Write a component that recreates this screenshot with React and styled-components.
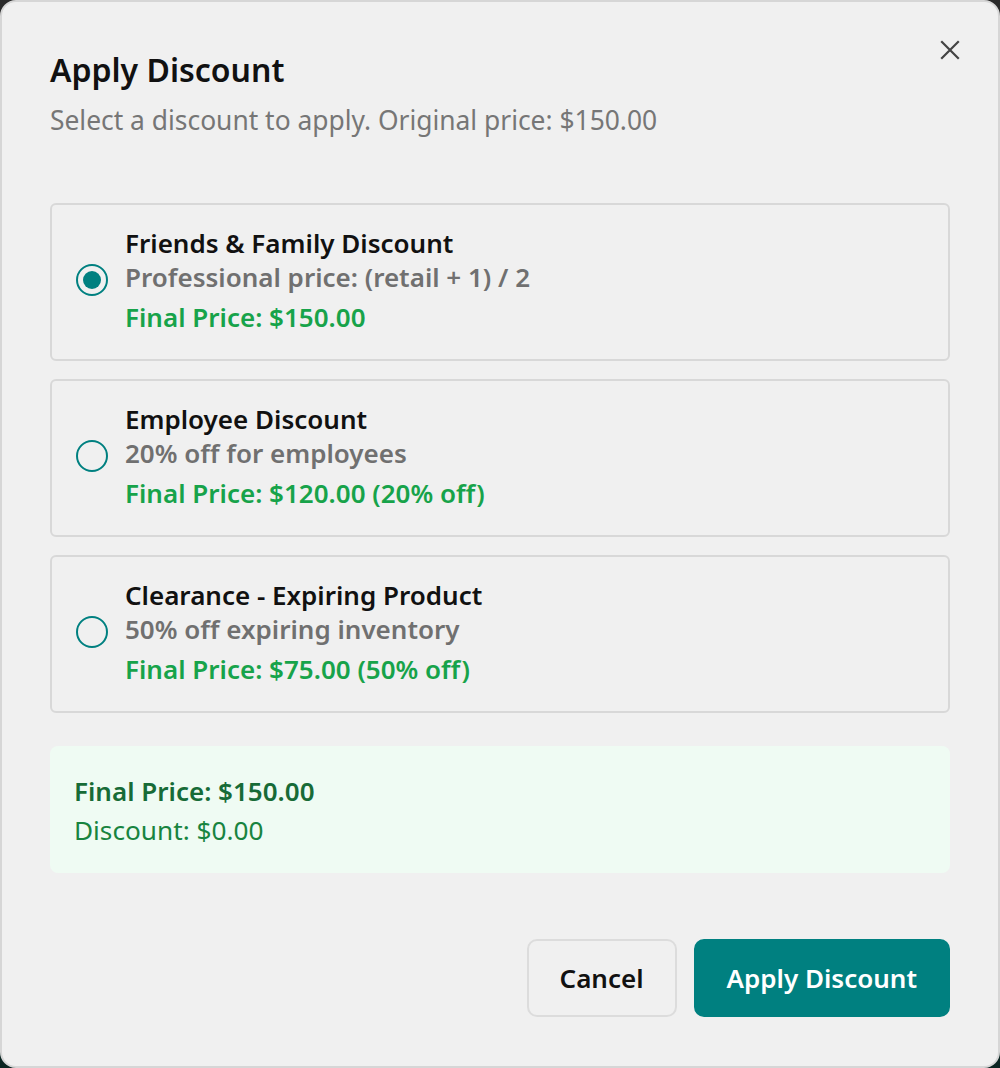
import React, { useState } from 'react';
import styled, { createGlobalStyle } from 'styled-components';

const teal = '#008080';
const font = '"Noto Sans", "Open Sans", sans-serif';

const GlobalStyle = createGlobalStyle`
  html, body {
    margin: 0;
    padding: 0;
    background: linear-gradient(#2a2a2a, #0b2522);
  }
  * {
    box-sizing: border-box;
  }
`;

const Dialog = styled.div`
  position: relative;
  display: flex;
  flex-direction: column;
  height: 1068px;
  padding: 48px 48px 49px;
  background: #f0f0f0;
  border: 2px solid #d6d6d6;
  border-radius: 16px;
  font-family: ${font};
  color: #111;
`;

const CloseButton = styled.button`
  position: absolute;
  top: 34px;
  right: 34px;
  width: 28px;
  height: 28px;
  padding: 0;
  border: none;
  background: none;
  display: flex;
  align-items: center;
  justify-content: center;
  cursor: pointer;
`;

const Title = styled.h2`
  margin: 0;
  font-size: 32px;
  line-height: 40px;
  font-weight: 600;
  color: #111;
`;

const Subtitle = styled.p`
  margin: 12px 0 0;
  font-size: 26.4px;
  line-height: 36px;
  color: #767676;
`;

const OptionList = styled.div`
  display: flex;
  flex-direction: column;
  gap: 18px;
  margin-top: 65px;
`;

const Option = styled.label`
  display: flex;
  align-items: center;
  gap: 17px;
  padding: 21px 24px 25px;
  border: 2px solid #d8d8d8;
  border-radius: 6px;
  cursor: pointer;
`;

const Radio = styled.span`
  flex: none;
  width: 32px;
  height: 32px;
  border: 2px solid ${teal};
  border-radius: 50%;
  display: flex;
  align-items: center;
  justify-content: center;

  &::after {
    content: '';
    width: 18px;
    height: 18px;
    border-radius: 50%;
    background: ${teal};
    display: ${p => (p.checked ? 'block' : 'none')};
  }
`;

const OptionText = styled.div`
  display: flex;
  flex-direction: column;
`;

const OptionLine = styled.span`
  margin-top: ${p => (p.gapTop ? '6px' : '0')};
  font-size: 26px;
  line-height: 34px;
  font-weight: 600;
  color: ${p => p.color || '#111'};
`;

const Summary = styled.div`
  margin-top: 33px;
  padding: 28px 24px 26px;
  background: #effbf3;
  border-radius: 8px;
  display: flex;
  flex-direction: column;
  gap: 5px;
`;

const SummaryTotal = styled.span`
  font-size: 26px;
  line-height: 34px;
  font-weight: 600;
  color: #176b37;
`;

const SummaryDiscount = styled.span`
  font-size: 26.2px;
  line-height: 34px;
  color: #18843f;
`;

const Footer = styled.div`
  margin-top: auto;
  display: flex;
  justify-content: flex-end;
  gap: 17px;
`;

const Button = styled.button`
  height: 78px;
  padding: 0 31px;
  border-radius: 10px;
  font-family: ${font};
  font-size: 26px;
  font-weight: 600;
  cursor: pointer;
  border: 2px solid ${p => (p.primary ? teal : '#dcdcdc')};
  background: ${p => (p.primary ? teal : 'transparent')};
  color: ${p => (p.primary ? '#fff' : '#111')};
`;

const discounts = [
  {
    id: 'ff',
    name: 'Friends & Family Discount',
    desc: 'Professional price: (retail + 1) / 2',
    price: 'Final Price: $150.00',
  },
  {
    id: 'emp',
    name: 'Employee Discount',
    desc: '20% off for employees',
    price: 'Final Price: $120.00 (20% off)',
  },
  {
    id: 'clr',
    name: 'Clearance - Expiring Product',
    desc: '50% off expiring inventory',
    price: 'Final Price: $75.00 (50% off)',
  },
];

export default function App() {
  const [selected, setSelected] = useState('ff');

  return (
    <>
      <GlobalStyle />
      <Dialog>
        <CloseButton aria-label="Close">
          <svg width="20" height="20" viewBox="0 0 20 20">
            <path d="M2 2 L18 18 M18 2 L2 18" stroke="#444" strokeWidth="2.2" strokeLinecap="square" />
          </svg>
        </CloseButton>
        <Title>Apply Discount</Title>
        <Subtitle>Select a discount to apply. Original price: $150.00</Subtitle>

        <OptionList>
          {discounts.map(d => (
            <Option key={d.id} onClick={() => setSelected(d.id)}>
              <Radio checked={selected === d.id} />
              <OptionText>
                <OptionLine>{d.name}</OptionLine>
                <OptionLine color="#707070">{d.desc}</OptionLine>
                <OptionLine gapTop color="#17a34a">{d.price}</OptionLine>
              </OptionText>
            </Option>
          ))}
        </OptionList>

        <Summary>
          <SummaryTotal>Final Price: $150.00</SummaryTotal>
          <SummaryDiscount>Discount: $0.00</SummaryDiscount>
        </Summary>

        <Footer>
          <Button>Cancel</Button>
          <Button primary>Apply Discount</Button>
        </Footer>
      </Dialog>
    </>
  );
}
